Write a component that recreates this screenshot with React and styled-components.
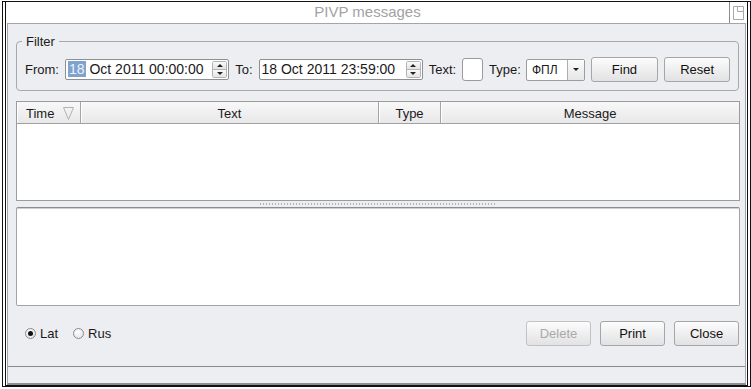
import styled, { createGlobalStyle } from "styled-components";

const GlobalStyle = createGlobalStyle`
  html, body {
    margin: 0;
    padding: 0;
    background: #fff;
  }
  body {
    font-family: "Liberation Sans", Arial, sans-serif;
    font-size: 13px;
    color: #1a1a1a;
  }
`;

const Frame = styled.div`
  box-sizing: border-box;
  width: 749px;
  height: 386px;
  margin: 1px 0 0 2px;
  border: 1px solid #111;
  padding: 0 2px;
  background: #fff;
`;

const Window = styled.div`
  box-sizing: border-box;
  height: 384px;
  border: 1px solid #111;
  border-top: none;
  display: flex;
  flex-direction: column;
`;

const TitleBar = styled.div`
  height: 21px;
  display: flex;
  background: #fff;
`;

const TitleText = styled.div`
  flex: 1;
  text-align: center;
  font-size: 15px;
  line-height: 20px;
  color: #a2a2a2;
`;

const TitleButton = styled.div`
  width: 17px;
  border-left: 1px solid #8c8c8c;
  display: flex;
  align-items: center;
  justify-content: center;
`;

const Body = styled.div`
  flex: 1;
  margin: 0 1px;
  display: flex;
  flex-direction: column;
  background: #edeef1;
  border: 1px solid #a4a4ac;
  border-bottom: 2px solid #8c8c92;
`;

const Content = styled.div`
  flex: 1;
  padding: 17px 5px 0 8px;
  display: flex;
  flex-direction: column;
`;

const Group = styled.div`
  position: relative;
  margin-right: 1px;
  border: 1px solid #a8a8b0;
  border-radius: 4px;
  padding: 15px 8px 8px;
`;

const GroupLabel = styled.span`
  position: absolute;
  top: -8px;
  left: 5px;
  padding: 0 4px;
  line-height: 15px;
  background: #edeef1;
`;

const Row = styled.div`
  height: 25px;
  display: flex;
  align-items: center;
  gap: 6px;
`;

const Label = styled.span`
  white-space: nowrap;
`;

const SpinBox = styled.div`
  box-sizing: border-box;
  width: 165px;
  height: 21px;
  display: flex;
  background: #fff;
  border: 1px solid #8e8f90;
  border-radius: 2px;
`;

const SpinText = styled.div`
  flex: 1;
  padding-left: 2px;
  font-size: 14px;
  line-height: 19px;
  white-space: nowrap;
`;

const Selected = styled.span`
  background: #7fa3cf;
  color: #eef2f7;
  padding: 0 1px;
`;

const Spinner = styled.div`
  width: 13px;
  margin: 1px 1px 1px 0;
  display: flex;
  flex-direction: column;
  border: 1px solid #b4b4b4;
  border-radius: 2px;
`;

const SpinHalf = styled.div`
  flex: 1;
  display: flex;
  align-items: center;
  justify-content: center;
  background: linear-gradient(#fafafa, #e4e4e4);
  & + & {
    border-top: 1px solid #b4b4b4;
  }
`;

const Arrow = styled.span`
  width: 0;
  height: 0;
  border-left: 3px solid transparent;
  border-right: 3px solid transparent;
  ${(p) =>
    p.$up ? "border-bottom: 3px solid #222;" : "border-top: 3px solid #222;"}
`;

const TextBox = styled.div`
  box-sizing: border-box;
  width: 21px;
  height: 23px;
  background: #fff;
  border: 1px solid #9a9a9a;
  border-radius: 3px;
`;

const Combo = styled.div`
  box-sizing: border-box;
  width: 59px;
  height: 22px;
  margin-left: -1px;
  display: flex;
  background: #fff;
  border: 1px solid #9c9c9c;
  border-radius: 2px;
`;

const ComboText = styled.div`
  flex: 1;
  padding-left: 5px;
  font-size: 12px;
  line-height: 20px;
`;

const ComboArrow = styled.div`
  width: 16px;
  display: flex;
  align-items: center;
  justify-content: center;
  border-left: 1px solid #adadad;
  background: linear-gradient(#fbfbfb, #e6e6e6);
`;

const Button = styled.button`
  box-sizing: border-box;
  width: ${(p) => p.$w}px;
  height: 25px;
  padding: 0;
  margin-left: ${(p) => p.$gap || 0}px;
  font-family: "Liberation Sans", Arial, sans-serif;
  font-size: 13px;
  color: #111;
  border: 1px solid #a6a6a6;
  border-radius: 3px;
  background: linear-gradient(#fcfcfc, #e2e2e4);

  &:disabled {
    color: #a9a9a9;
    border-color: #c2c2c2;
  }
`;

const Table = styled.div`
  box-sizing: border-box;
  height: 100px;
  margin-top: 10px;
  background: #fff;
  border: 1px solid #9c9c9c;
`;

const Header = styled.div`
  height: 21px;
  display: grid;
  grid-template-columns: 64px 298px 62px 1fr;
  border-bottom: 1px solid #a0a0a0;
`;

const HeaderCell = styled.div`
  display: flex;
  align-items: center;
  justify-content: ${(p) => (p.$left ? "flex-start" : "center")};
  padding: 1px 0 0 ${(p) => (p.$left ? 9 : 0)}px;
  gap: 9px;
  background: linear-gradient(#f8f8f8, #e8e8ea);
  border-right: 1px solid #a4a4a4;
  box-shadow: inset 1px 0 0 #fff;

  &:last-child {
    border-right: none;
  }
`;

const Splitter = styled.div`
  height: 6px;
  display: flex;
  align-items: center;
  justify-content: center;
`;

const Grip = styled.div`
  width: 237px;
  height: 2px;
  background: repeating-linear-gradient(
    90deg,
    #b4b4b8 0 1px,
    transparent 1px 3px
  );
`;

const Panel = styled.div`
  box-sizing: border-box;
  height: 99px;
  background: #fff;
  border: 1px solid #a2a2a2;
  border-top-color: #8c8c8c;
  border-radius: 2px;
  box-shadow: inset 0 1px 0 #cfcfcf;
`;

const BottomRow = styled.div`
  height: 25px;
  margin: 15px 1px 0 0;
  padding-left: 9px;
  display: flex;
  align-items: center;
`;

const RadioItem = styled.label`
  display: flex;
  align-items: center;
  gap: 4px;
  margin-right: 15px;
`;

const Radio = styled.span`
  box-sizing: border-box;
  width: 11px;
  height: 11px;
  border-radius: 50%;
  border: 1px solid #8a8a8a;
  background: radial-gradient(circle at 40% 35%, #fff, #dedede);
  display: flex;
  align-items: center;
  justify-content: center;

  &::after {
    content: "";
    width: 5px;
    height: 5px;
    border-radius: 50%;
    background: ${(p) => (p.$checked ? "#111" : "transparent")};
  }
`;

const Actions = styled.div`
  margin-left: auto;
  display: flex;
`;

const StatusBar = styled.div`
  height: 16px;
  border-top: 1px solid #8a8a8e;
`;

const SortIcon = () => (
  <svg width="11" height="13" viewBox="0 0 11 13">
    <path d="M0.5 0.5 H10.5 L5.5 12.5 Z" fill="none" stroke="#b2b2b2" />
  </svg>
);

const RestoreIcon = () => (
  <svg width="11" height="14" viewBox="0 0 11 14">
    <path
      d="M0.5 0.5 H10.5 V13.5 H0.5 Z M4.5 0.5 V5.5 H10.5"
      fill="none"
      stroke="#a8a8a8"
    />
  </svg>
);

const DateSpin = ({ day, rest, selected }) => (
  <SpinBox>
    <SpinText>
      {selected ? <Selected>{day}</Selected> : day} {rest}
    </SpinText>
    <Spinner>
      <SpinHalf>
        <Arrow $up />
      </SpinHalf>
      <SpinHalf>
        <Arrow />
      </SpinHalf>
    </Spinner>
  </SpinBox>
);

export default function App() {
  return (
    <>
      <GlobalStyle />
      <Frame>
        <Window>
          <TitleBar>
            <TitleText>PIVP messages</TitleText>
            <TitleButton>
              <RestoreIcon />
            </TitleButton>
          </TitleBar>
          <Body>
            <Content>
              <Group>
                <GroupLabel>Filter</GroupLabel>
                <Row>
                  <Label>From:</Label>
                  <DateSpin day="18" rest="Oct 2011 00:00:00" selected />
                  <Label>To:</Label>
                  <DateSpin day="18" rest="Oct 2011 23:59:00" />
                  <Label>Text:</Label>
                  <TextBox />
                  <Label>Type:</Label>
                  <Combo>
                    <ComboText>ФПЛ</ComboText>
                    <ComboArrow>
                      <Arrow />
                    </ComboArrow>
                  </Combo>
                  <Button $w={68}>Find</Button>
                  <Button $w={66}>Reset</Button>
                </Row>
              </Group>
              <Table>
                <Header>
                  <HeaderCell $left>
                    Time
                    <SortIcon />
                  </HeaderCell>
                  <HeaderCell>Text</HeaderCell>
                  <HeaderCell>Type</HeaderCell>
                  <HeaderCell>Message</HeaderCell>
                </Header>
              </Table>
              <Splitter>
                <Grip />
              </Splitter>
              <Panel />
              <BottomRow>
                <RadioItem>
                  <Radio $checked />
                  Lat
                </RadioItem>
                <RadioItem>
                  <Radio />
                  Rus
                </RadioItem>
                <Actions>
                  <Button $w={65} disabled>
                    Delete
                  </Button>
                  <Button $w={65} $gap={9}>
                    Print
                  </Button>
                  <Button $w={65} $gap={9}>
                    Close
                  </Button>
                </Actions>
              </BottomRow>
            </Content>
            <StatusBar />
          </Body>
        </Window>
      </Frame>
    </>
  );
}
